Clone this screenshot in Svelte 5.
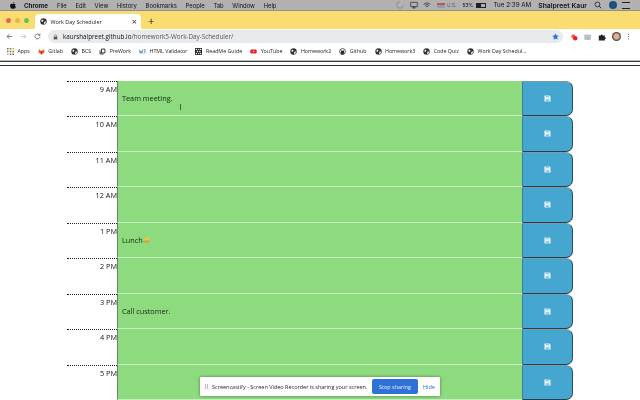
<script>
  const menus = ['File','Edit','View','History','Bookmarks','People','Tab','Window','Help'];
  const rows = [
    ['9 AM','Team meeting.'],['10 AM',''],['11 AM',''],['12 AM',''],['1 PM','Lunch'],['2 PM',''],['3 PM','Call customer.'],['4 PM',''],['5 PM','']
  ];
  const marks = [
    ['apps','Apps'],['fox','Gitlab'],['globe','BCS'],['doc','PreWork'],['w3','HTML Validator'],['qr','ReadMe Guide'],['yt','YouTube'],['globe','Homework2'],['gh','Github'],['globe','Homework3'],['globe','Code Quiz'],['globe','Work Day Schedul...']
  ];
</script>

{#snippet globe()}
  <svg class="ico" viewBox="0 0 12 12"><circle cx="6" cy="6" r="5.5" fill="#333"/><path d="M3 2.500 6 4 5 6.500 2.500 6ZM7.500 6.500l3-.5-1 3.500-2.500 1Z" fill="#fff"/></svg>
{/snippet}

<div class="screen">
  <div class="menubar">
    <svg class="apple" viewBox="0 0 10 12"><path d="M7 3c1 0 2 .5 2.500 1.300C8 5.300 8.300 7.600 10 8.200 9.400 9.800 8.300 11.500 7.200 11.500c-.8 0-1-.5-2-.5s-1.300.5-2 .5C1.800 11.500 0 8.800 0 6.300 0 4 1.500 3 2.800 3c.9 0 1.700.6 2.300.6S6 3 7 3ZM5 2.800C5 1.400 6 .3 7.200 0c.1 1.500-1 2.800-2.200 2.800Z" fill="#111"/></svg>
    <b class="app">Chrome</b>
    {#each menus as m}<span class="menu">{m}</span>{/each}
    <span class="right">
      <svg class="st moon" viewBox="0 0 10 10"><path d="M5 1a4 4 0 1 0 4 4" fill="none" stroke="#8d8d8d" stroke-width="1.200"/></svg>
      <svg class="st scr" viewBox="0 0 12 10"><path d="M1 1h10v6.500H1ZM4 9.500h4L6 7Z" fill="none" stroke="#222" stroke-width="1"/></svg>
      <svg class="st wifi" viewBox="0 0 12 10"><path d="M1 4a7 7 0 0 1 10 0M2.700 5.800a4.600 4.600 0 0 1 6.600 0M4.400 7.500a2.200 2.200 0 0 1 3.200 0" fill="none" stroke="#222"/></svg>
      <i class="flag"></i><span class="us">U.S.</span>
      <span class="pct">53%</span>
      <i class="batt"><i></i></i>
      <span class="clock">Tue 2:39 AM</span>
      <b class="user">Shalpreet Kaur</b>
      <svg class="st search" viewBox="0 0 10 10"><circle cx="4.300" cy="4.300" r="3" fill="none" stroke="#222"/><path d="M6.500 6.500 9 9" stroke="#222" stroke-width="1.200"/></svg>
      <i class="siri"></i>
      <i class="list"></i>
    </span>
  </div>

  <div class="tabstrip">
    <span class="lights"><i class="r"></i><i class="y"></i><i class="g"></i></span>
    <div class="tab">
      {@render globe()}
      <span class="tabtitle">Work Day Scheduler</span>
      <span class="x">×</span>
    </div>
    <span class="plus">+</span>
  </div>

  <div class="toolbar">
    <svg class="nav" viewBox="0 0 10 10"><path d="M9 5H1.500M5 1.500 1.500 5 5 8.500" fill="none" stroke="#555" stroke-width="1.100"/></svg>
    <svg class="nav" viewBox="0 0 10 10"><path d="M1 5h7.500M5 1.500 8.500 5 5 8.500" fill="none" stroke="#bbb" stroke-width="1.100"/></svg>
    <svg class="nav" viewBox="0 0 10 10"><path d="M8.500 5a3.500 3.500 0 1 1-1-2.500M8.500 .8v2.400H6" fill="none" stroke="#555" stroke-width="1.100"/></svg>
    <div class="omni">
      <svg class="lock" viewBox="0 0 8 10"><path d="M1 4.500h6V9H1Z" fill="#555"/><path d="M2.300 4.500V3a1.700 1.700 0 0 1 3.400 0v1.500" fill="none" stroke="#555"/></svg>
      <span class="url"><span class="host">kaurshalpreet.github.io</span><span class="path">/homework5-Work-Day-Scheduler/</span></span>
      <svg class="star" viewBox="0 0 10 10"><path d="M5 .5 6.400 3.600 9.700 4 7.200 6.200 7.900 9.500 5 7.800 2.100 9.500 2.800 6.200 .3 4 3.600 3.600Z" fill="#2a6fdb"/></svg>
    </div>
    <div class="exts">
      <svg class="ext" viewBox="0 0 10 10"><circle cx="4" cy="4" r="2.500" fill="#e66"/><circle cx="6.500" cy="6.500" r="2.800" fill="#e22"/></svg>
      <svg class="ext" viewBox="0 0 10 10"><path d="M1 2.500h7v5.500H1Z" fill="#ccc" stroke="#888" stroke-width=".6"/><path d="M2.500 7 5 4.500 7 7Z" fill="#8aa"/></svg>
      <svg class="ext" viewBox="0 0 10 10"><path d="M1 3h2.500a1.200 1.200 0 0 1 2.400 0H8.500v2.300a1.200 1.200 0 0 1 0 2.400V9.500H1Z" fill="#222"/></svg>
      <i class="avatar"></i>
      <svg class="dots" viewBox="0 0 4 12"><circle cx="2" cy="2" r="1" fill="#555"/><circle cx="2" cy="6" r="1" fill="#555"/><circle cx="2" cy="10" r="1" fill="#555"/></svg>
    </div>
  </div>

  <div class="bookmarks">
    {#each marks as [k, t]}
      <span class="mark">
        {#if k === 'globe'}{@render globe()}
        {:else if k === 'apps'}<svg class="ico" viewBox="0 0 9 9"><path d="M0 0h2v2H0Z" fill="#d33"/><path d="M3.500 0h2v2h-2Z" fill="#3a3"/><path d="M7 0h2v2H7Z" fill="#e8b000"/><path d="M0 3.500h2v2H0Z" fill="#38c"/><path d="M3.500 3.500h2v2h-2Z" fill="#d33"/><path d="M7 3.500h2v2H7Z" fill="#3a3"/><path d="M0 7h2v2H0Z" fill="#e8b000"/><path d="M3.500 7h2v2h-2Z" fill="#38c"/><path d="M7 7h2v2H7Z" fill="#d33"/></svg>
        {:else if k === 'fox'}<svg class="ico" viewBox="0 0 10 10"><path d="M5 9.500 .5 6 1.500 1 3 4h4l1.500-3 1 5Z" fill="#e2662c"/><path d="M5 9.500 3 4h4Z" fill="#d33b1f"/></svg>
        {:else if k === 'doc'}<svg class="ico" viewBox="0 0 10 10"><path d="M3.500 1.500h5v5.500h-5ZM1.500 3.500v5h5" fill="none" stroke="#222" stroke-width="1.300"/></svg>
        {:else if k === 'w3'}<svg class="ico" viewBox="0 0 12 10"><path d="M.5 2 2 8l1.500-4L5 8l1.500-6" fill="none" stroke="#2a6fb0" stroke-width="1.200"/><path d="M8 2h3L9.500 5c1.500 0 1.500 3-1.500 3" fill="none" stroke="#2a6fb0" stroke-width="1.200"/></svg>
        {:else if k === 'qr'}<svg class="ico" viewBox="0 0 10 10"><rect width="10" height="10" fill="#222"/><path d="M1 1h2v2H1ZM4.500 1h1.500v2H4.500ZM7 1h2v2H7ZM2.500 4h2v2h-2ZM6 4h2v2H6ZM1 7h2v2H1ZM4.500 7h1.500v2H4.500ZM7 7h2v2H7Z" fill="#eee"/></svg>
        {:else if k === 'yt'}<svg class="ico" viewBox="0 0 12 10"><rect x=".5" y="1.500" width="11" height="7" rx="2" fill="#e3231c"/><path d="M5 3.500 7.800 5 5 6.500Z" fill="#fff"/></svg>
        {:else}<svg class="ico" viewBox="0 0 12 12"><circle cx="6" cy="6" r="5" fill="none" stroke="#222" stroke-width="1.300"/><path d="M4 11V8.500C3 8 2.800 6.800 3.500 5.800L3.400 3.800 5 4.500h2l1.600-.7-.1 2c.7 1 .5 2.200-.5 2.700V11Z" fill="#222"/></svg>
        {/if}
        <span>{t}</span>
      </span>
    {/each}
  </div>

  <div class="chromeline"></div>

  <main class="page">
    <div class="rule"></div>
    <div class="planner">
      {#each rows as [time, text]}
        <div class="row">
          <div class="hour">{time}</div>
          <div class="desc">
            <span>{text}</span>
            {#if time === '1 PM'}<svg class="burger" viewBox="0 0 10 10"><path d="M1 5a4 4.500 0 0 1 8 0Z" fill="#ecc24a"/><path d="M.8 5.300h8.400v1.500H.8Z" fill="#c9923a"/><path d="M2 7.200h6l-1 2H3Z" fill="#e2a83a"/></svg>{/if}
            {#if time === '9 AM'}<span class="cursor"></span>{/if}
          </div>
          <div class="save">
            <svg viewBox="0 0 8 8"><path d="M.5.500H6.300L7.500 1.700V7.500H.5Z" fill="#e4f2f9"/><path d="M2.200 .5h3.300v2H2.200Z" fill="#8cc6de"/><path d="M2.200 4.800h3.600v2.700H2.200Z" fill="#8cc6de"/></svg>
          </div>
        </div>
      {/each}
    </div>
  </main>

  <div class="sharebar">
    <span class="grip"></span>
    <span class="sharetext">Screencastify - Screen Video Recorder is sharing your screen.</span>
    <span class="stop">Stop sharing</span>
    <span class="hide">Hide</span>
  </div>
</div>

<style>
  :global(body) { margin: 0; background: #fff; }
  .screen {
    position: relative;
    width: 640px; height: 400px; overflow: hidden;
    display: flex; flex-direction: column;
    background: #fff;
    font-family: "Open Sans", "Noto Sans", sans-serif;
    filter: blur(0.2px);
  }
  i { display: block; }

  .menubar {
    flex: 0 0 10px; height: 10px;
    background: #b1b1b1;
    display: flex; align-items: center;
    font-family: "Inter", "Liberation Sans", sans-serif;
    font-size: 5.9px; color: #111;
    padding-left: 10px;
    box-sizing: border-box;
  }
  .apple { width: 6px; height: 7px; margin-right: 8px; }
  .app { font-weight: 700; font-size: 6.200px; margin-right: 9px; }
  .menu { margin-right: 8.700px; }
  .right { margin-left: auto; display: flex; align-items: center; padding-right: 10px; }
  .st { width: 8px; height: 8px; }
  .moon { margin-right: 6px; }
  .scr { margin-right: 5px; }
  .wifi { margin-right: 6px; }
  .search { margin-right: 7px; }
  .flag { width: 8px; height: 5px; background: linear-gradient(#b55 50%, #99a 50%); margin-right: 2px; }
  .us { font-size: 5px; color: #666; margin-right: 6px; }
  .pct { font-size: 5px; margin-right: 2px; }
  .batt { width: 10px; height: 5px; border: 1px solid #222; margin-right: 8px; box-sizing: border-box; }
  .batt i { width: 4px; height: 3px; background: #222; }
  .clock { font-size: 6.250px; margin-right: 7px; }
  .user { font-weight: 600; font-size: 6.800px; margin-right: 7px; }
  .siri { width: 8px; height: 8px; border-radius: 50%; background: #1f4f7a; margin-right: 5px; }
  .list { width: 8px; height: 5px; border-top: 1px solid #222; border-bottom: 1px solid #222; }

  .tabstrip {
    flex: 0 0 19px; height: 19px;
    background: #f9dc72;
    border-top: 1px solid #8f8f8f;
    box-sizing: border-box;
    display: flex; align-items: flex-end;
  }
  .lights { display: flex; gap: 4px; padding: 0 0 6px 6px; width: 29px; box-sizing: border-box; }
  .lights i { width: 5.500px; height: 5.500px; border-radius: 50%; }
  .r { background: #e8605a; } .y { background: #e8b83c; } .g { background: #5fc454; }
  .tab {
    width: 106px; height: 15px;
    background: #fff; border-radius: 4px 4px 0 0;
    display: flex; align-items: center; padding-left: 5px; box-sizing: border-box;
    margin-left: 6px;
    font-size: 5.450px; color: #222;
  }
  .ico { width: 7px; height: 7px; flex: none; }
  .tabtitle { margin-left: 3.500px; flex: 1; }
  .x { font-size: 9px; margin-right: 4px; line-height: 1; color: #333; }
  .plus { font-size: 11px; margin: 0 0 1px 7px; line-height: 14px; color: #222; }

  .toolbar {
    flex: 0 0 15px; height: 15px;
    display: flex; align-items: center;
    background: #fff;
    padding-left: 6px;
    box-sizing: border-box;
  }
  .nav { width: 7px; height: 7px; margin-right: 7px; }
  .omni {
    width: 515px; height: 13px;
    background: #e9eaec; border-radius: 7px;
    display: flex; align-items: center; padding: 0 4px 0 5px; box-sizing: border-box;
    font-size: 6.300px;
  }
  .lock { width: 5px; height: 6px; margin-right: 5px; }
  .url { flex: 1; }
  .host { color: #111; }
  .path { color: #555; }
  .star { width: 7px; height: 7px; }
  .exts { display: flex; align-items: center; gap: 6px; margin-left: 7px; }
  .ext { width: 8px; height: 8px; }
  .avatar { width: 9px; height: 9px; border-radius: 50%; background: radial-gradient(#d8b49a 35%, #4d3525 70%); }
  .dots { width: 3px; height: 7px; }

  .bookmarks {
    flex: 0 0 14px; height: 14px;
    display: flex; align-items: center;
    padding-left: 7px;
    font-size: 5.300px; color: #222;
    box-sizing: border-box;
  }
  .mark { display: flex; align-items: center; gap: 3.500px; margin-right: 8px; white-space: nowrap; }

  .chromeline { flex: 0 0 2px; height: 2px; margin-top: 2px; border-top: 1px solid #bbb; background: #3c3c3c; box-sizing: border-box; }

  .page { flex: 1; min-height: 0; }
  .rule { height: 3px; border-bottom: 1px solid #2e2e2e; }
  .planner { padding: 14.500px 0 0 67px; }
  .row { display: flex; height: 35.500px; width: 506px; }
  .hour {
    width: 50px; box-sizing: border-box;
    border-top: 1px dotted #222;
    text-align: right;
    font-size: 7.300px; line-height: 11px; padding-top: 2px; color: #111;
  }
  .desc {
    position: relative;
    width: 405px; box-sizing: border-box;
    background: #8edb7f;
    border-left: 1px solid #65846a;
    border-bottom: 1px solid #c6eebe;
    padding: 11px 0 0 4px;
    font-size: 7.300px; line-height: 13px; color: #0f260f;
    display: flex; align-items: flex-start;
  }
  .burger { width: 7px; height: 7px; margin-top: 3px; }
  .cursor { position: absolute; left: 62px; top: 23px; width: 1px; height: 6px; background: #555; }
  .save {
    width: 51px; box-sizing: border-box;
    background: #45a7cf;
    border-left: 1px solid #3b7d94;
    border-right: 1px solid #2b4c5c;
    border-bottom: 1px solid #2b3f4a;
    border-top: 1px solid #7a9aa8;
    border-radius: 0 7px 7px 0;
    display: flex; align-items: center; justify-content: center;
  }
  .save svg { width: 7px; height: 7px; }

  .sharebar {
    position: absolute; left: 200px; top: 377px;
    width: 240px; height: 19px;
    background: #fdfdfd;
    box-shadow: 0 0 3px rgba(0,0,0,.45);
    display: flex; align-items: center;
    box-sizing: border-box;
    padding-left: 5px;
    font-size: 5.500px; color: #2a2a2a;
    white-space: nowrap;
  }
  .grip { width: 3px; height: 5px; border-left: 1px solid #bbb; border-right: 1px solid #bbb; box-sizing: border-box; margin-right: 4px; }
  .sharetext { width: 160px; }
  .stop {
    width: 46px; height: 15px; background: #2f72d6; color: #e8f0fc; border-radius: 2px;
    display: flex; align-items: center; justify-content: center; margin-right: 5px;
  }
  .hide { color: #2f72d6; }
</style>
